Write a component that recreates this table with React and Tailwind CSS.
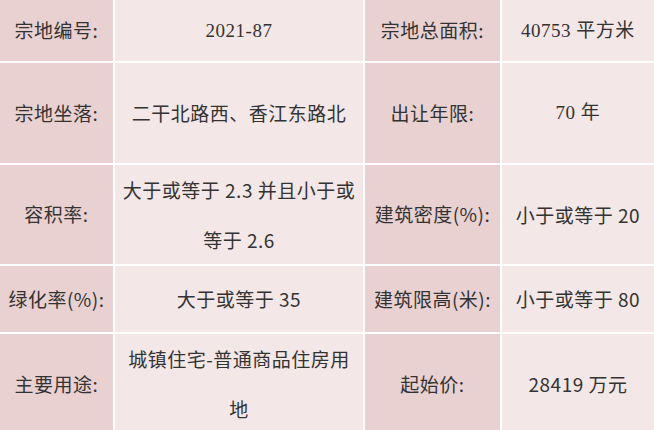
import React from "react";

const sans = "font-['Noto_Sans_CJK_SC',sans-serif]";
const serif = "font-['Liberation_Serif','Noto_Sans_CJK_SC',serif]";

const rows = [
  ["宗地编号:", "2021-87", "宗地总面积:", "40753 平方米", true],
  ["宗地坐落:", "二干北路西、香江东路北", "出让年限:", "70 年", true],
  ["容积率:", "大于或等于 2.3 并且小于或等于 2.6", "建筑密度(%):", "小于或等于 20", false],
  ["绿化率(%):", "大于或等于 35", "建筑限高(米):", "小于或等于 80", false],
  ["主要用途:", "城镇住宅-普通商品住房用地", "起始价:", "28419 万元", false],
];

const Label = ({ children }) => (
  <div className="bg-[#e9d1d2] flex items-center justify-center text-center px-1 whitespace-nowrap">{children}</div>
);

const Value = ({ children, className = "" }) => (
  <div className={"bg-[#f4e7e7] flex items-center justify-center text-center px-[6px] leading-[50px] " + className}>
    {children}
  </div>
);

export default function App() {
  return (
    <div className={`w-[654px] h-[430px] overflow-hidden bg-white ${sans} text-[19px] tracking-[0.5px] text-[#333]`}>
      <div className="grid grid-cols-[113px_248px_135px_1fr] grid-rows-[61px_100px_99px_66px_100px] gap-[2px] bg-white">
        {rows.map(([l1, v1, l2, v2, isSerif], i) => (
          <React.Fragment key={i}>
            <Label>{l1}</Label>
            <Value className={i === 0 ? serif : ""}>{v1}</Value>
            <Label>{l2}</Label>
            <Value className={isSerif ? serif : ""}>{v2}</Value>
          </React.Fragment>
        ))}
      </div>
    </div>
  );
}
